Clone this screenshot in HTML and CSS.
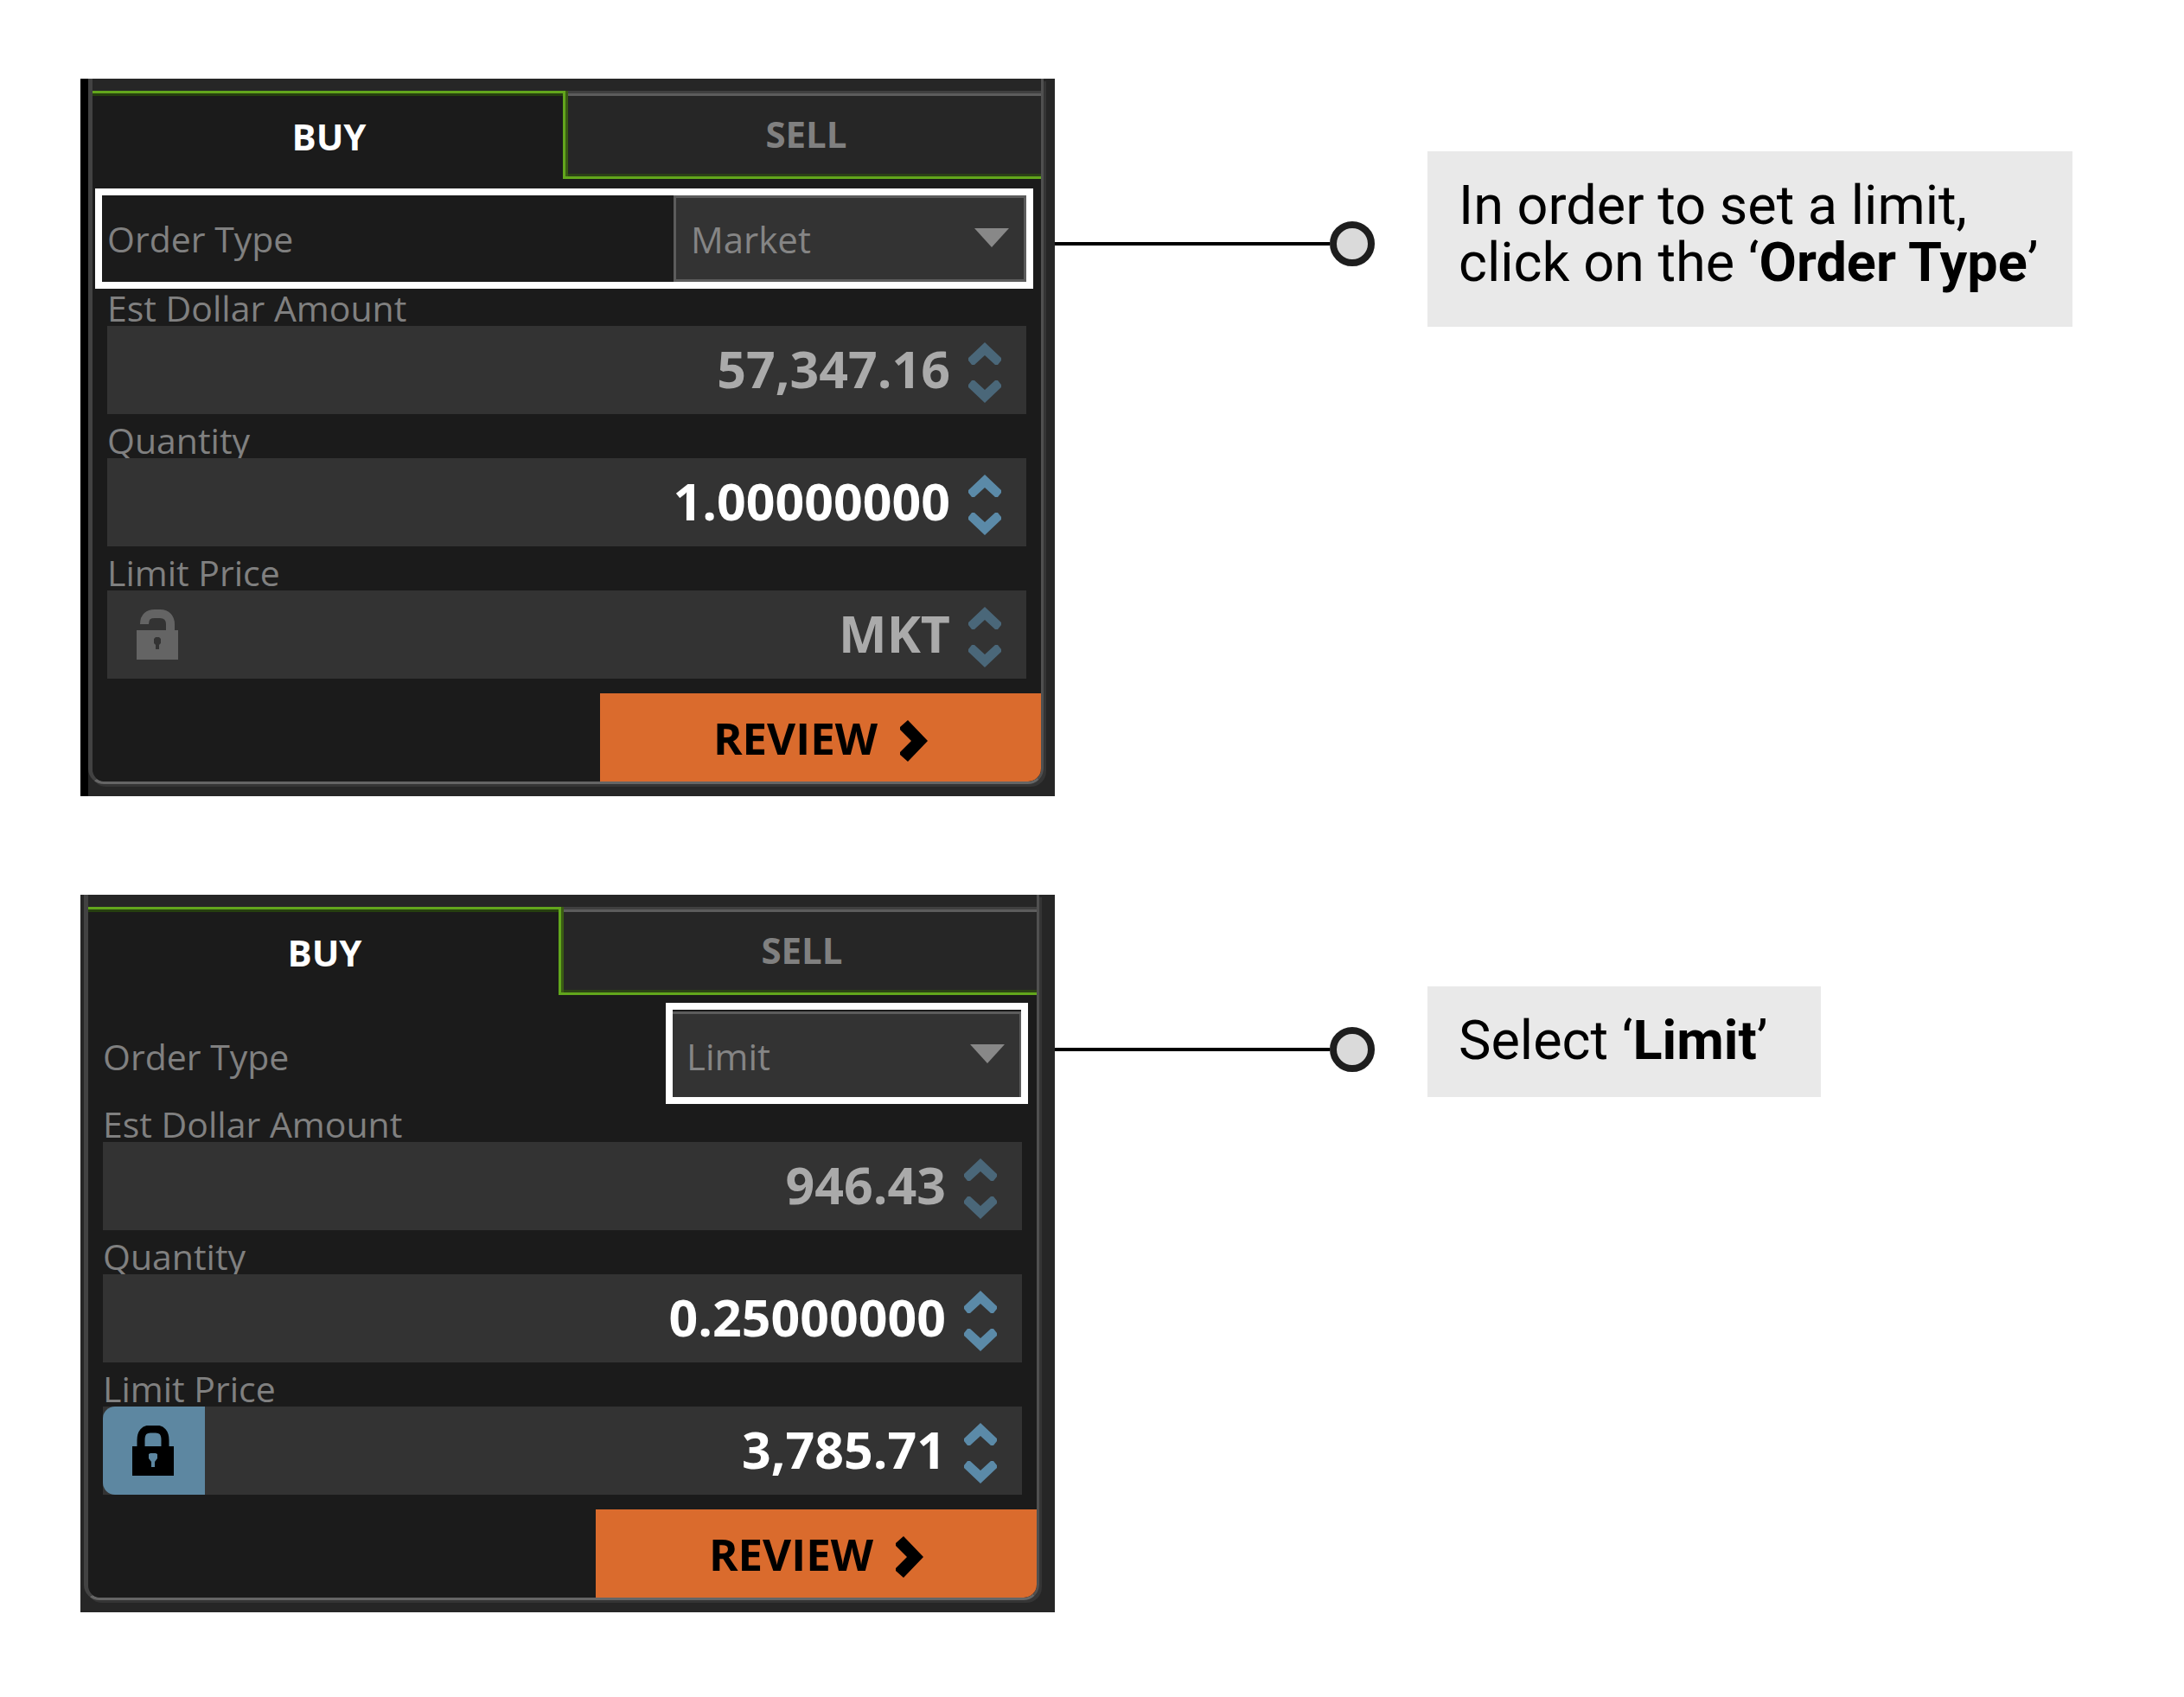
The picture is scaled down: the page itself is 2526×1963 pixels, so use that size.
FILE: index.html
```html
<!DOCTYPE html>
<html lang="en">
<head>
    <meta charset="UTF-8">
    <meta name="viewport" content="width=device-width, initial-scale=1.0">
    <title>Setting a limit order</title>
    <link rel="stylesheet" href="styles.css">
</head>
<body>
    <!-- shared icons -->
    <svg class="sprite" aria-hidden="true">
        <symbol id="icon-up" viewBox="0 0 38 26">
            <path d="M19 0 L38 18 V21 L34 26 H31 L19 15 L7 26 H4 L0 21 V18 Z"/>
        </symbol>
        <symbol id="icon-down" viewBox="0 0 38 26">
            <path d="M19 26 L38 8 V5 L34 0 H31 L19 11 L7 0 H4 L0 5 V8 Z"/>
        </symbol>
        <symbol id="icon-next" viewBox="0 0 32 48">
            <path d="M9 0 L32 24 L9 48 L0 40 V37 L13 24 L0 11 V8 Z"/>
        </symbol>
        <symbol id="icon-unlocked" viewBox="0 0 48 58">
            <path d="M9 17 C9 8 14 5 21 5 H27 C35 5 39 10 39 17 V26" fill="none" stroke="currentColor" stroke-width="10"/>
            <path fill-rule="evenodd" d="M0 24 H48 V58 H0 Z M20 34 V39 L22 41 V46 H26 V41 L28 39 V34 L26 32 H22 Z"/>
        </symbol>
        <symbol id="icon-locked" viewBox="0 0 48 58">
            <path d="M10 26 V17 C10 8 14 4 21 4 H27 C34 4 38 8 38 17 V26" fill="none" stroke="currentColor" stroke-width="9"/>
            <path fill-rule="evenodd" d="M0 24 H48 V58 H0 Z M19 33 V38 L22 42 V48 H26 V42 L29 38 V33 L27 32 H21 Z"/>
        </symbol>
    </svg>

    <main class="guide">
        <section class="step step-one">
            <div class="ticket">
                <div class="ticket-body">
                    <div class="tabs" role="tablist">
                        <button class="tab tab-buy" type="button" role="tab" aria-selected="true">BUY</button>
                        <button class="tab tab-sell" type="button" role="tab" aria-selected="false">SELL</button>
                    </div>
                    <form class="order-form">
                        <div class="type-row highlight">
                            <label class="type-label" for="type1">Order Type</label>
                            <div class="select-wrap">
                                <select class="select" id="type1">
                                    <option selected>Market</option>
                                    <option>Limit</option>
                                </select>
                            </div>
                        </div>

                        <label class="field-label" for="amount1">Est Dollar Amount</label>
                        <div class="field field-muted">
                            <input class="field-input" id="amount1" type="text" value="57,347.16">
                            <div class="stepper">
                                <button class="step-btn" type="button" aria-label="Increase"><svg><use href="#icon-up"/></svg></button>
                                <button class="step-btn" type="button" aria-label="Decrease"><svg><use href="#icon-down"/></svg></button>
                            </div>
                        </div>

                        <label class="field-label" for="quantity1">Quantity</label>
                        <div class="field">
                            <input class="field-input" id="quantity1" type="text" value="1.00000000">
                            <div class="stepper">
                                <button class="step-btn" type="button" aria-label="Increase"><svg><use href="#icon-up"/></svg></button>
                                <button class="step-btn" type="button" aria-label="Decrease"><svg><use href="#icon-down"/></svg></button>
                            </div>
                        </div>

                        <label class="field-label" for="price1">Limit Price</label>
                        <div class="field field-muted">
                            <button class="lock" type="button" aria-label="Lock price"><svg><use href="#icon-unlocked"/></svg></button>
                            <input class="field-input" id="price1" type="text" value="MKT">
                            <div class="stepper">
                                <button class="step-btn" type="button" aria-label="Increase"><svg><use href="#icon-up"/></svg></button>
                                <button class="step-btn" type="button" aria-label="Decrease"><svg><use href="#icon-down"/></svg></button>
                            </div>
                        </div>

                        <button class="review" type="button">REVIEW <svg><use href="#icon-next"/></svg></button>
                    </form>
                </div>
            </div>
            <div class="connector"><span class="line"></span><span class="dot"></span></div>
            <p class="callout">In order to set a limit,<br>click on the ‘<b>Order Type</b>’</p>
        </section>

        <section class="step step-two">
            <div class="ticket">
                <div class="ticket-body">
                    <div class="tabs" role="tablist">
                        <button class="tab tab-buy" type="button" role="tab" aria-selected="true">BUY</button>
                        <button class="tab tab-sell" type="button" role="tab" aria-selected="false">SELL</button>
                    </div>
                    <form class="order-form">
                        <div class="type-row">
                            <label class="type-label" for="type2">Order Type</label>
                            <div class="select-wrap highlight">
                                <select class="select" id="type2">
                                    <option>Market</option>
                                    <option selected>Limit</option>
                                </select>
                            </div>
                        </div>

                        <label class="field-label" for="amount2">Est Dollar Amount</label>
                        <div class="field field-muted">
                            <input class="field-input" id="amount2" type="text" value="946.43">
                            <div class="stepper">
                                <button class="step-btn" type="button" aria-label="Increase"><svg><use href="#icon-up"/></svg></button>
                                <button class="step-btn" type="button" aria-label="Decrease"><svg><use href="#icon-down"/></svg></button>
                            </div>
                        </div>

                        <label class="field-label" for="quantity2">Quantity</label>
                        <div class="field">
                            <input class="field-input" id="quantity2" type="text" value="0.25000000">
                            <div class="stepper">
                                <button class="step-btn" type="button" aria-label="Increase"><svg><use href="#icon-up"/></svg></button>
                                <button class="step-btn" type="button" aria-label="Decrease"><svg><use href="#icon-down"/></svg></button>
                            </div>
                        </div>

                        <label class="field-label" for="price2">Limit Price</label>
                        <div class="field">
                            <button class="lock lock-on" type="button" aria-label="Unlock price"><svg><use href="#icon-locked"/></svg></button>
                            <input class="field-input" id="price2" type="text" value="3,785.71">
                            <div class="stepper">
                                <button class="step-btn" type="button" aria-label="Increase"><svg><use href="#icon-up"/></svg></button>
                                <button class="step-btn" type="button" aria-label="Decrease"><svg><use href="#icon-down"/></svg></button>
                            </div>
                        </div>

                        <button class="review" type="button">REVIEW <svg><use href="#icon-next"/></svg></button>
                    </form>
                </div>
            </div>
            <div class="connector"><span class="line"></span><span class="dot"></span></div>
            <p class="callout">Select ‘<b>Limit</b>’</p>
        </section>
    </main>
</body>
</html>
```
FILE: styles.css
```css
* {
    box-sizing: border-box;
}

body {
    margin: 0;
    background-color: #ffffff;
    font-family: 'Open Sans', 'Noto Sans', sans-serif;
}

button, input, select {
    margin: 0;
    padding: 0;
    border: none;
    border-radius: 0;
    background: none;
    font-family: inherit;
    cursor: pointer;
}

svg {
    display: block;
    fill: currentColor;
}

.sprite {
    position: absolute;
    width: 0;
    height: 0;
}

.guide {
    display: flex;
    flex-direction: column;
    gap: 114px;
    padding: 91px 129px 98px 93px;
}

.step {
    display: grid;
    grid-template-columns: 1127fr 431fr 746fr;
    align-items: start;
}

/* order ticket */
.ticket {
    background-color: #262626;
    padding-bottom: 14px;
}

.step-one .ticket {
    border-left: 9px solid #000000;
    padding-right: 13px;
}

.step-two .ticket {
    padding-left: 4px;
    padding-right: 18px;
}

.ticket-body {
    padding-top: 14px;
    border: solid #505050;
    border-width: 0 3px 3px 5px;
    border-left-color: #424242;
    border-bottom-color: #656565;
    border-radius: 0 0 18px 18px;
    box-shadow: 3px 3px 0 #353535;
    overflow: hidden;
}

.tabs {
    display: grid;
    grid-template-columns: 544fr 553fr;
    height: 102px;
}

.tab {
    font-size: 42px;
    font-weight: bold;
}

.tab-buy {
    padding: 3px 0 0 3px;
    color: #ffffff;
    background-color: #1b1b1b;
    box-shadow: inset 0 3px #62a61c, inset 0 6px #26400f;
}

.tab-sell {
    padding: 0 0 3px 10px;
    color: #808080;
    background-color: #262626;
    box-shadow: inset 3px 0 #62a61c, inset 0 -3px #62a61c, inset 6px 0 #3a5c14,
        inset 0 -6px #2c4216, inset 0 3px #404040, inset 0 6px #5c5c5c;
}

.order-form {
    display: flex;
    flex-direction: column;
    padding: 19px 0 0;
    background-color: #1b1b1b;
}

.type-row {
    position: relative;
    display: grid;
    grid-template-columns: 655fr 408fr;
    align-items: center;
    height: 100px;
    margin: 0 17px;
}

.type-label,
.field-label {
    color: #808080;
    font-size: 41px;
}

.field-label {
    height: 51px;
    margin: 0 17px;
    line-height: 60px;
}

.select-wrap {
    position: relative;
    align-self: end;
    height: 100px;
}

.select-wrap::before {
    content: '';
    position: absolute;
    top: 38px;
    right: 20px;
    border: solid transparent;
    border-width: 22px 20px 0;
    border-top-color: #888888;
}

.select {
    appearance: none;
    width: 100%;
    height: 100%;
    padding-left: 17px;
    border: 3px solid #5c5c5c;
    background-color: #333333;
    color: #858585;
    font-size: 42px;
}

/* white frame round the control being explained */
.highlight::after {
    content: '';
    position: absolute;
    border: 8px solid #ffffff;
    pointer-events: none;
}

.type-row.highlight::after {
    inset: -8px -8px -8px -14px;
}

.select-wrap.highlight {
    height: 103px;
}

.select-wrap.highlight::after {
    inset: -10px -7px -4px -4px;
}

/* sits over the descenders of the label above it */
.field {
    position: relative;
    display: flex;
    align-items: center;
    height: 102px;
    margin: 0 17px;
    padding-right: 29px;
    background-color: #333333;
    color: #ffffff;
}

.field-input {
    flex: 1;
    min-width: 0;
    height: 100%;
    padding-bottom: 4px;
    color: inherit;
    font-size: 59px;
    font-weight: bold;
    text-align: right;
    cursor: text;
}

.stepper {
    display: grid;
    gap: 18px;
    margin-left: 21px;
    padding-top: 5px;
    color: #5b8aa8;
}

.step-btn {
    color: inherit;
}

.step-btn svg {
    width: 38px;
    height: 26px;
}

.field-muted {
    color: #aaaaaa;
}

.field-muted .stepper {
    color: #4a6779;
}

.lock {
    display: flex;
    align-items: center;
    justify-content: center;
    width: 118px;
    height: 100%;
    padding-right: 3px;
    color: #646464;
}

.lock svg {
    width: 48px;
    height: 58px;
}

.lock-on {
    background-color: #5d87a1;
    color: #000000;
    border-radius: 14px 0 0 14px;
}

.review {
    display: flex;
    align-items: center;
    justify-content: center;
    gap: 26px;
    align-self: flex-end;
    width: 46.5%;
    height: 102px;
    margin-top: 17px;
    background-color: #da6b2d;
    color: #000000;
    font-size: 51px;
    font-weight: bold;
}

.review svg {
    width: 32px;
    height: 48px;
    margin-top: 8px;
}

/* connector and note */
.connector {
    display: flex;
    align-items: center;
    padding-right: 61px;
}

.line {
    flex: 1;
    height: 4px;
    background-color: #000000;
}

.dot {
    width: 52px;
    height: 52px;
    border: 8px solid #1e1e1e;
    border-radius: 50%;
    background-color: #dadada;
}

.callout {
    justify-self: start;
    margin: 0;
    padding: 30px 36px 32px;
    background-color: #e9e9e9;
    color: #000000;
    font-family: Roboto, sans-serif;
    font-size: 63px;
    line-height: 66px;
}

.step-one .connector {
    margin-top: 165px;
}

.step-one .callout {
    justify-self: stretch;
    margin-top: 84px;
    padding-bottom: 41px;
}

.step-two .connector {
    margin-top: 153px;
}

.step-two .callout {
    margin-top: 106px;
    padding-right: 62px;
}
```
